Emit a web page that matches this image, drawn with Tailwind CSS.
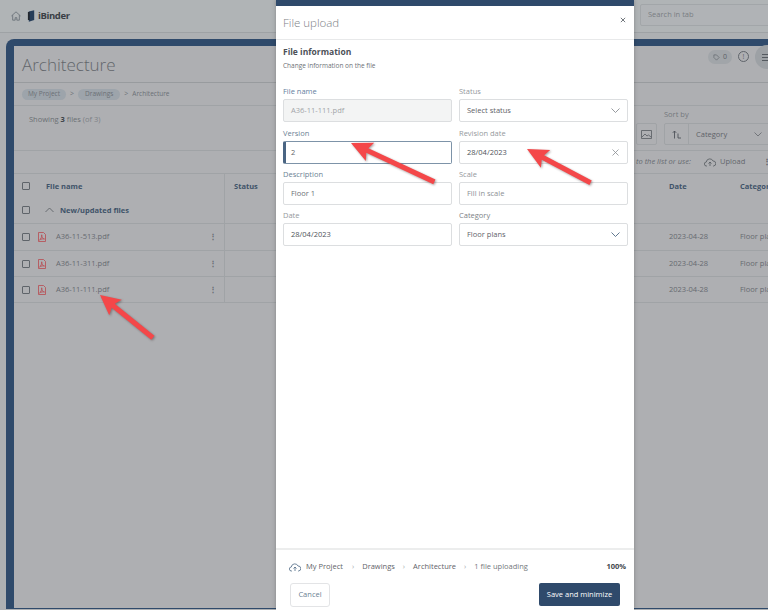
<!DOCTYPE html>
<html lang="en">
<head>
    <meta charset="UTF-8">
    <title>File upload</title>
    <script src="https://cdn.jsdelivr.net/npm/@tailwindcss/browser@4"></script>
</head>
<body class="relative w-[768px] h-[610px] overflow-hidden bg-[#adb0b3] font-['Open_Sans',sans-serif] text-[#5c6066]">

    <!-- page behind the dialog -->
    <header class="h-[33px] flex items-center border-b border-[#9ea2a5] bg-[#b0b4b6] relative">
        <svg class="ml-[11px] w-[10px] h-[10px] text-[#5f6870]" viewBox="0 0 12 12" fill="none" stroke="currentColor" stroke-width="0.9"><path d="M0.5 6 6 1l5.500 5M2 5v6h3V8h2v3h3V5"/></svg>
        <svg class="ml-[6px] w-[9px] h-[12px]" viewBox="0 0 10 13"><path d="M2 1.500 8 0v11l-6 2z" fill="#263d59"/><path d="M1 2h2v9H1z" fill="#23282e"/></svg>
        <span class="ml-[2px] text-[9.500px] font-bold text-[#3a3f45] tracking-[-0.4px]">iBinder</span>
        <div class="ml-auto mr-[-4px] w-[132px] h-[22px] mb-[3px] border border-[#a2a6a9] rounded-[2px] bg-[#b0b3b6] flex items-center pl-[7px] text-[7.500px] text-[#7a7e83]">Search in tab</div>
    </header>

    <main class="absolute left-[6px] top-[39px] w-[800px] h-[570px] border-l-[8px] border-t-[7px] border-b-[1px] border-[#2f4a6b] rounded-tl-[8px] bg-[#aeafb2]">
        <div class="h-[37px] border-b border-[#989b9e] flex items-center">
            <h1 class="ml-[8px] text-[17px] font-light text-[#62666b] mb-[-1px]">Architecture</h1>
            <div class="absolute left-[694px] top-[4px] w-[24px] h-[14px] rounded-full bg-[#a1a5a9] flex items-center justify-center gap-[3px] text-[7px] text-[#5b6066]">
                <svg class="w-[7px] h-[7px]" viewBox="0 0 8 8" fill="none" stroke="currentColor" stroke-width="0.7"><path d="M1 1h3l3 3-3 3-3-3z"/></svg>0
            </div>
            <div class="absolute left-[724px] top-[5px] w-[11px] h-[11px] rounded-full border border-[#5f646a] flex items-center justify-center text-[7px] leading-none">!</div>
            <div class="absolute left-[741px] top-[-1px] w-[24px] h-[24px] rounded-full bg-[#9da1a5] flex flex-col justify-center gap-[2px] pl-[7px]">
                <span class="block w-[9px] h-px bg-[#555a60]"></span><span class="block w-[9px] h-px bg-[#555a60]"></span><span class="block w-[9px] h-px bg-[#555a60]"></span>
            </div>
        </div>
        <nav class="h-[23px] border-b border-[#a0a3a6] flex items-center pl-[8px] text-[6.500px] text-[#6b7076]">
            <span class="h-[11px] px-[6px] rounded-full bg-[#9da4ab] flex items-center">My Project</span>
            <span class="mx-[4px] text-[7px]">&gt;</span>
            <span class="h-[11px] px-[7px] rounded-full bg-[#9da4ab] flex items-center">Drawings</span>
            <span class="mx-[4px] text-[7px]">&gt;</span>
            <span>Architecture</span>
        </nav>
        <div class="h-[45px] border-b border-[#a0a3a6] relative">
            <p class="ml-[15px] mt-[8px] text-[7.500px] text-[#6b6f74] absolute">Showing <b class="text-[#3d4248]">3</b> files <span class="text-[#7d8186]">(of 3)</span></p>
            <div class="absolute left-[622px] top-[17px] w-[21px] h-[22px] border border-[#a0a3a6] rounded-[2px] flex items-center justify-center">
                <svg class="w-[11px] h-[9px]" viewBox="0 0 11 9" fill="none" stroke="#565b61" stroke-width="0.8"><path d="M.5.500h10v8H.500zM1 7l3-3 2 2 1.500-1 2.500 2"/></svg>
            </div>
            <span class="absolute left-[650px] top-[3px] text-[7.500px] text-[#74787d]">Sort by</span>
            <div class="absolute left-[650px] top-[17px] w-[120px] h-[22px] border border-[#a0a3a6] rounded-[2px] flex items-center text-[7.500px] text-[#5e6268]">
                <span class="w-[24px] h-full border-r border-[#a0a3a6] flex items-center justify-center">
                    <svg class="w-[10px] h-[9px]" viewBox="0 0 10 9" fill="none" stroke="#4f545a" stroke-width="0.9"><path d="M2.500 8.500V1M.8 2.800 2.500 1l1.700 1.800M6 3.500V8h3"/></svg>
                </span>
                <span class="ml-[7px] mt-[1px]">Category</span>
                <svg class="ml-[27px] w-[8px] h-[5px]" viewBox="0 0 8 5" fill="none" stroke="#62666c" stroke-width="0.8"><path d="M.5.500 4 4 7.500.500"/></svg>
            </div>
        </div>
        <div class="h-[23px] border-b border-[#a0a3a6] relative text-[7.500px]">
            <span class="absolute left-[622px] top-[5px] italic text-[#666a70]">to the list or use:</span>
            <svg class="absolute left-[690px] top-[6px] w-[12px] h-[10px]" viewBox="0 0 12 10" fill="none" stroke="#555a60" stroke-width="0.8"><path d="M3 9H2.500a2 2 0 0 1-.2-4A3.500 3.500 0 0 1 9 4a2.500 2.500 0 0 1 .5 5H9M6 9V5M4.500 6.500 6 5l1.500 1.500"/></svg>
            <span class="absolute left-[706px] top-[5px] text-[#62666c]">Upload</span>
            <span class="absolute left-[749px] top-[5px] font-bold text-[#555a60]">⋮</span>
        </div>

        <div class="grid grid-cols-[211px_435px_80px_1fr] text-[7.500px] text-[#666a70]">
            <div class="h-[50px] border-r border-[#a0a3a6] border-b relative">
                <span class="absolute left-[8px] top-[8px] w-[8px] h-[8px] border border-[#5f646a] rounded-[1px]"></span>
                <span class="absolute left-[32px] top-[7px] font-bold text-[#3f5369]">File name</span>
                <span class="absolute left-[8px] top-[32px] w-[8px] h-[8px] border border-[#5f646a] rounded-[1px]"></span>
                <svg class="absolute left-[31px] top-[33px] w-[9px] h-[6px]" viewBox="0 0 9 6" fill="none" stroke="#565b61" stroke-width="0.8"><path d="M.5 5 4.500 1l4 4"/></svg>
                <span class="absolute left-[46px] top-[31px] font-bold text-[#3f5369]">New/updated files</span>
            </div>
            <div class="h-[50px] border-b border-[#a0a3a6] pl-[9px] pt-[7px] font-bold text-[#3f5369]">Status</div>
            <div class="h-[50px] border-b border-[#a0a3a6] pl-[9px] pt-[7px] font-bold text-[#3f5369]">Date</div>
            <div class="h-[50px] border-b border-[#a0a3a6] pt-[7px] font-bold text-[#3f5369]">Category</div>

            <div class="h-[27px] border-r border-b border-[#a0a3a6] flex items-center pl-[8px]">
                <span class="w-[8px] h-[8px] border border-[#5f646a] rounded-[1px]"></span>
                <svg class="ml-[8px] w-[8px] h-[10px]" viewBox="0 0 8 10" fill="none" stroke="#b84a50" stroke-width="0.8"><path d="M.5.500h5l2 2v7h-7zM1.500 8C3 7 4 4.500 3.700 2.800 3.500 5 5 7 6.500 7 5 6.500 3 7 1.500 8z"/></svg>
                <span class="ml-[10px]">A36-11-513.pdf</span>
                <span class="ml-auto mr-[7px] font-bold">⋮</span>
            </div>
            <div class="h-[27px] border-b border-[#a0a3a6]"></div>
            <div class="h-[27px] border-b border-[#a0a3a6] pl-[9px] flex items-center">2023-04-28</div>
            <div class="h-[27px] border-b border-[#a0a3a6] flex items-center">Floor plans</div>

            <div class="h-[26px] border-r border-b border-[#a0a3a6] flex items-center pl-[8px]">
                <span class="w-[8px] h-[8px] border border-[#5f646a] rounded-[1px]"></span>
                <svg class="ml-[8px] w-[8px] h-[10px]" viewBox="0 0 8 10" fill="none" stroke="#b84a50" stroke-width="0.8"><path d="M.5.500h5l2 2v7h-7zM1.500 8C3 7 4 4.500 3.700 2.800 3.500 5 5 7 6.500 7 5 6.500 3 7 1.500 8z"/></svg>
                <span class="ml-[10px]">A36-11-311.pdf</span>
                <span class="ml-auto mr-[7px] font-bold">⋮</span>
            </div>
            <div class="h-[26px] border-b border-[#a0a3a6]"></div>
            <div class="h-[26px] border-b border-[#a0a3a6] pl-[9px] flex items-center">2023-04-28</div>
            <div class="h-[26px] border-b border-[#a0a3a6] flex items-center">Floor plans</div>

            <div class="h-[26px] border-r border-b border-[#a0a3a6] flex items-center pl-[8px]">
                <span class="w-[8px] h-[8px] border border-[#5f646a] rounded-[1px]"></span>
                <svg class="ml-[8px] w-[8px] h-[10px]" viewBox="0 0 8 10" fill="none" stroke="#b84a50" stroke-width="0.8"><path d="M.5.500h5l2 2v7h-7zM1.500 8C3 7 4 4.500 3.700 2.800 3.500 5 5 7 6.500 7 5 6.500 3 7 1.500 8z"/></svg>
                <span class="ml-[10px]">A36-11-111.pdf</span>
                <span class="ml-auto mr-[7px] font-bold">⋮</span>
            </div>
            <div class="h-[26px] border-b border-[#a0a3a6]"></div>
            <div class="h-[26px] border-b border-[#a0a3a6] pl-[9px] flex items-center">2023-04-28</div>
            <div class="h-[26px] border-b border-[#a0a3a6] flex items-center">Floor plans</div>
        </div>
    </main>

    <!-- dialog -->
    <section class="absolute left-[276px] top-0 w-[358px] h-[610px] flex flex-col bg-white border-t-[6px] border-[#2f4a6b] shadow-[0_0_4px_rgba(0,0,0,0.25)]">
        <div class="h-[34px] shrink-0 border-b border-[#e8e9ea] flex items-center justify-between pl-[7px] pr-[7px]">
            <h2 class="text-[11.500px] font-light text-[#7d8186] mt-[1px]">File upload</h2>
            <svg class="w-[6px] h-[6px] mb-[6px] mr-[1px]" viewBox="0 0 7 7" stroke="#5b6168" stroke-width="1"><path d="m1 1 5 5M6 1 1 6"/></svg>
        </div>
        <div class="flex-1 px-[7px]">
            <h3 class="mt-[5px] text-[8.500px] leading-[13px] font-bold text-[#4c5157]">File information</h3>
            <p class="mt-[3px] text-[6.500px] leading-[10px] text-[#6c7076]">Change information on the file</p>

            <div class="mt-[14px] grid grid-cols-[169px_169px] gap-x-[7px] gap-y-[5px] text-[7.500px]">
                <label class="block">
                    <span class="block h-[13px] leading-[13px] text-[#6580a0]">File name</span>
                    <div class="mt-[1px] h-[23px] px-[7px] flex items-center border border-[#dcdee0] rounded-[2px] bg-[#f3f4f4] text-[#a2a5a8]">A36-11-111.pdf</div>
                </label>
                <label class="block">
                    <span class="block h-[13px] leading-[13px] text-[#95999d]">Status</span>
                    <div class="mt-[1px] h-[23px] px-[7px] flex items-center justify-between border border-[#dcdee0] rounded-[2px] text-[#5f6369]">Select status
                        <svg class="w-[9px] h-[5px]" viewBox="0 0 9 5" fill="none" stroke="#7c8086" stroke-width="0.8"><path d="M.5.500 4.500 4.500l4-4"/></svg>
                    </div>
                </label>
                <label class="block">
                    <span class="block h-[13px] leading-[13px] text-[#6c7f94]">Version</span>
                    <div class="mt-[1px] h-[23px] pl-[5px] flex items-center border border-[#7d93a8] border-l-[3px] border-l-[#4a6583] rounded-[2px] text-[#5f6369]">2</div>
                </label>
                <label class="block">
                    <span class="block h-[13px] leading-[13px] text-[#95999d]">Revision date</span>
                    <div class="mt-[1px] h-[23px] px-[7px] flex items-center justify-between border border-[#dcdee0] rounded-[2px] text-[#4e5359]">28/04/2023
                        <svg class="w-[7px] h-[7px] mr-[1px]" viewBox="0 0 7 7" stroke="#8a8e93" stroke-width="0.8"><path d="m.5.500 6 6M6.500.500l-6 6"/></svg>
                    </div>
                </label>
                <label class="block mt-[-1px]">
                    <span class="block h-[13px] leading-[13px] text-[#6c7f94]">Description</span>
                    <div class="mt-[1px] h-[23px] px-[7px] flex items-center border border-[#dcdee0] rounded-[2px] text-[#6c7076]">Floor 1</div>
                </label>
                <label class="block mt-[-1px]">
                    <span class="block h-[13px] leading-[13px] text-[#95999d]">Scale</span>
                    <div class="mt-[1px] h-[23px] px-[7px] flex items-center border border-[#dcdee0] rounded-[2px] text-[#8d9095]">Fill in scale</div>
                </label>
                <label class="block mt-[-1px]">
                    <span class="block h-[13px] leading-[13px] text-[#95999d]">Date</span>
                    <div class="mt-[1px] h-[23px] px-[7px] flex items-center border border-[#dcdee0] rounded-[2px] text-[#4e5359]">28/04/2023</div>
                </label>
                <label class="block mt-[-1px]">
                    <span class="block h-[13px] leading-[13px] text-[#7d8186]">Category</span>
                    <div class="mt-[1px] h-[23px] px-[7px] flex items-center justify-between border border-[#dcdee0] rounded-[2px] text-[#5f6369]">Floor plans
                        <svg class="w-[9px] h-[5px]" viewBox="0 0 9 5" fill="none" stroke="#4f6a85" stroke-width="0.9"><path d="M.5.500 4.500 4.500l4-4"/></svg>
                    </div>
                </label>
            </div>
        </div>
        <footer class="h-[62px] shrink-0 border-t-2 border-[#eceded] pt-[8px] px-[14px] relative">
            <div class="flex items-center h-[17px] text-[7.500px] text-[#5f6369]">
                <svg class="w-[12px] h-[10px] ml-[-1px]" viewBox="0 0 12 10" fill="none" stroke="#4f6a85" stroke-width="0.8"><path d="M3 9H2.500a2 2 0 0 1-.2-4A3.500 3.500 0 0 1 9 4a2.500 2.500 0 0 1 .5 5H9M6 9V5M4.500 6.500 6 5l1.500 1.500"/></svg>
                <span class="ml-[5px]">My Project</span>
                <span class="ml-[9px] mr-[8px] text-[#a8abae]">›</span>
                <span>Drawings</span>
                <span class="mx-[8px] text-[#a8abae]">›</span>
                <span>Architecture</span>
                <span class="mx-[8px] text-[#a8abae]">›</span>
                <span class="text-[#74787d]">1 file uploading</span>
                <span class="ml-auto mr-[-6px] font-bold text-[#43474c]">100%</span>
            </div>
            <div class="mt-[8px] flex justify-between text-[7.500px]">
                <button class="h-[24px] w-[40px] border border-[#e3e4e6] rounded-[3px] text-[#6c7f94]">Cancel</button>
                <button class="h-[23px] w-[81px] rounded-[2px] bg-[#2f4a6b] text-white">Save and minimize</button>
            </div>
        </footer>
    </section>

    <!-- red annotation arrows -->
    <svg class="absolute left-0 top-0 w-[768px] h-[610px] pointer-events-none" viewBox="0 0 768 610" fill="#f44749" style="filter:drop-shadow(1px 1.500px 1px rgba(60,40,40,.45))">
        <polygon transform="translate(100 295) rotate(39)" points="0,0 20,-10 17,-2.500 68,-2.500 68,2.500 17,2.500 20,10"/>
        <polygon transform="translate(351 143) rotate(25)" points="0,0 21,-10 18,-2.500 92,-2.500 92,2.500 18,2.500 21,10"/>
        <polygon transform="translate(527 149) rotate(28)" points="0,0 21,-10 18,-2.500 72,-2.500 72,2.500 18,2.500 21,10"/>
    </svg>
</body>
</html>
